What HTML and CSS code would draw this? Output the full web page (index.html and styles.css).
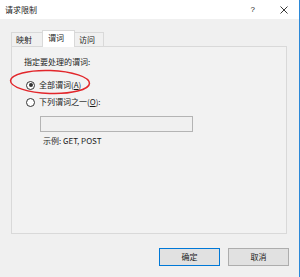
FILE: index.html
```html
<!DOCTYPE html>
<html lang="zh">
<head>
<meta charset="utf-8">
<link rel="stylesheet" href="styles.css">
</head>
<body>
<div class="window">
  <div class="titlebar">
    <span class="title">请求限制</span>
    <span class="tb-help">?</span>
    <svg class="tb-close" width="8" height="8" viewBox="0 0 8 8"><path d="M0.5 0.5L7.5 7.5M7.5 0.5L0.5 7.5" stroke="#222" stroke-width="0.9" fill="none"/></svg>
  </div>
  <div class="content">
    <div class="tabs">
      <div class="tab t1">映射</div>
      <div class="tab t2 active">谓词</div>
      <div class="tab t3">访问</div>
    </div>
    <div class="panel">
      <div class="legend">指定要处理的谓词:</div>
      <div class="radio-row r1">
        <span class="radio checked"></span>
        <span class="lbl">全部谓词(<u>A</u>)</span>
      </div>
      <div class="radio-row r2">
        <span class="radio"></span>
        <span class="lbl">下列谓词之一(<u>O</u>):</span>
      </div>
      <div class="textbox"></div>
      <div class="example">示例: GET, POST</div>
    </div>
    <div class="buttons">
      <div class="btn primary">确定</div>
      <div class="btn">取消</div>
    </div>
  </div>
  <svg class="mark" width="84" height="28" viewBox="0 0 84 28"><ellipse cx="41" cy="14" rx="39.5" ry="11.5" transform="rotate(2 41 14)" fill="none" stroke="#e2262b" stroke-width="1.5"/></svg>
</div>
</body>
</html>
```
FILE: styles.css
```css
html, body {
  margin: 0;
  padding: 0;
  background: #f0f0f0;
}
body {
  font-family: "Noto Sans CJK SC", "Noto Sans", sans-serif;
  font-size: 8px;
  line-height: 12px;
  color: #1a1a1a;
}
.window {
  position: relative;
  width: 300px;
  height: 277px;
  box-sizing: border-box;
  border-right: 1px solid #2b88d8;
  background: #f0f0f0;
  overflow: hidden;
}
.titlebar {
  height: 19px;
  background: #ffffff;
  display: flex;
  align-items: center;
  padding-left: 5px;
}
.title {
  flex: 1;
  color: #222;
}
.tb-help {
  font-family: "Liberation Sans", sans-serif;
  font-size: 8px;
  color: #222;
  margin-right: 25px;
}
.tb-close {
  margin-right: 11px;
}
.content {
  padding: 11px 12px 0 11px;
}
.tabs {
  display: flex;
  align-items: flex-end;
  height: 16px;
}
.tab {
  box-sizing: border-box;
  height: 14px;
  border: 1px solid #d9d9d9;
  border-bottom: none;
  background: #f0f0f0;
  padding-left: 4px;
  line-height: 13px;
}
.t1 { width: 31px; }
.t2 { width: 33px; }
.t3 { width: 29px; }
.tab.active {
  height: 17px;
  background: #ffffff;
  margin-bottom: -1px;
  position: relative;
  z-index: 1;
  padding-left: 5px;
  line-height: 14px;
  border-color: #d9d9d9;
}
.t1 { border-right: none; }
.t3 { border-left: none; }
.panel {
  box-sizing: border-box;
  height: 188px;
  width: 276px;
  border: 1px solid #d9d9d9;
  background: #f2f2f2;
  padding: 9px 0 0 12px;
  display: flex;
  flex-direction: column;
  align-items: flex-start;
}
.legend {
  height: 12px;
}
.radio-row {
  display: flex;
  align-items: center;
  height: 12px;
  margin-left: 2px;
}
.r1 { margin-top: 11px; }
.r2 { margin-top: 5px; }
.radio {
  box-sizing: border-box;
  width: 9px;
  height: 9px;
  border: 1px solid #333;
  border-radius: 50%;
  background: #fff;
  display: flex;
  align-items: center;
  justify-content: center;
  margin-right: 4px;
}
.radio.checked::after {
  content: "";
  width: 4px;
  height: 4px;
  border-radius: 50%;
  background: #333;
}
.lbl u {
  text-decoration: underline;
  text-underline-offset: 1px;
}
.textbox {
  box-sizing: border-box;
  margin-top: 8px;
  margin-left: 16px;
  width: 153px;
  height: 16px;
  border: 1px solid #b4b4b4;
  background: #f0f0f0;
}
.example {
  margin-top: 3px;
  margin-left: 19px;
}
.buttons {
  display: flex;
  justify-content: flex-end;
  gap: 8px;
  margin-top: 14px;
  margin-right: -2px;
}
.btn {
  box-sizing: border-box;
  width: 61px;
  height: 18px;
  border: 1px solid #adadad;
  background: #e1e1e1;
  text-align: center;
  line-height: 16px;
}
.btn.primary {
  border-color: #0078d7;
}
.mark {
  position: absolute;
  left: 9px;
  top: 68px;
}
```
